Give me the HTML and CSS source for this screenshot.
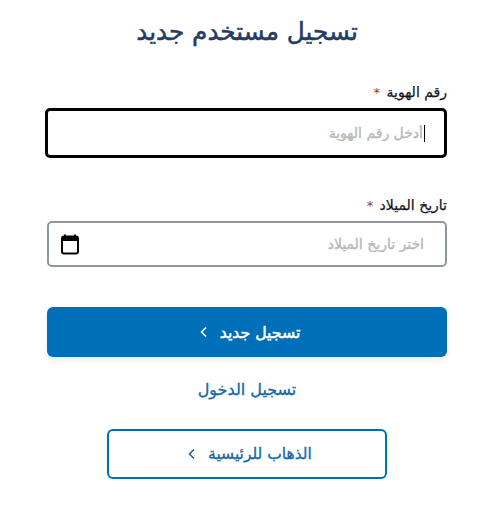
FILE: index.html
```html
<!DOCTYPE html>
<html lang="ar" dir="rtl">
<head>
    <meta charset="UTF-8">
    <meta name="viewport" content="width=device-width, initial-scale=1.0">
    <title>تسجيل مستخدم جديد</title>
    <link rel="stylesheet" href="styles.css">
</head>
<body>

    <form class="register-form">
        <h1 class="title">تسجيل مستخدم جديد</h1>

        <!-- ID number -->
        <div class="form-group group-id">
            <label class="form-label" for="idNumber">رقم الهوية <span class="required">*</span></label>
            <div class="field field-focus">
                <span class="caret"></span>
                <input class="field-input" type="text" id="idNumber" placeholder="أدخل رقم الهوية">
            </div>
        </div>

        <!-- Birth date -->
        <div class="form-group group-date">
            <label class="form-label" for="birthDate">تاريخ الميلاد <span class="required">*</span></label>
            <div class="field">
                <input class="field-input" type="text" id="birthDate" placeholder="اختر تاريخ الميلاد">
                <svg class="calendar-icon" width="24" height="24" viewBox="0 0 24 24" fill="none">
                    <path d="M7 2.5v3M17 2.5v3" stroke="#000" stroke-width="2"/>
                    <rect x="4" y="4.5" width="16" height="17" rx="2" stroke="#000" stroke-width="2"/>
                    <rect x="4" y="4.5" width="16" height="4.5" fill="#000"/>
                </svg>
            </div>
        </div>

        <button class="button button-primary" type="button">
            <span>تسجيل جديد</span>
            <svg class="chevron" width="12" height="12" viewBox="0 0 12 12" fill="none">
                <path d="M8 1.5 3.5 6 8 10.5" stroke="currentColor" stroke-width="1.6"/>
            </svg>
        </button>

        <a class="login-link" href="#">تسجيل الدخول</a>

        <button class="button button-outline" type="button">
            <span>الذهاب للرئيسية</span>
            <svg class="chevron" width="12" height="12" viewBox="0 0 12 12" fill="none">
                <path d="M8 1.5 3.5 6 8 10.5" stroke="currentColor" stroke-width="1.6"/>
            </svg>
        </button>
    </form>

</body>
</html>
```

FILE: styles.css
```css
body {
    font-family: "DejaVu Sans", "Noto Sans", sans-serif;
    background-color: #fff;
    margin: 0;
}
.register-form {
    display: flex;
    flex-direction: column;
    align-items: center;
    padding: 17px 45px 0 47px;
}
.title {
    margin: 0;
    font-size: 24.7px;
    line-height: 30px;
    font-weight: 400;
    color: #243b64;
    -webkit-text-stroke: 0.5px #243b64;
}
.form-group {
    width: 100%;
}
.group-id {
    margin-top: 36px;
}
.group-date {
    margin-top: 38px;
}
.form-label {
    display: block;
    font-size: 14px;
    line-height: 18px;
    font-weight: 400;
    color: #14141f;
    -webkit-text-stroke: 0.25px #14141f;
    margin-bottom: 6px;
}
.required {
    font-size: 13px;
    margin-right: 2px;
    color: #8a3b2a;
    -webkit-text-stroke: 0;
}
.field {
    position: relative;
    display: flex;
    align-items: center;
    height: 46px;
    box-sizing: border-box;
    padding: 0 21px;
    border: 2px solid #8e979c;
    border-radius: 5px;
    background-color: #fff;
}
.field-focus {
    height: 50px;
    margin-left: -2px;
    border: 3px solid #000;
}
.field-input {
    flex: 1;
    min-width: 0;
    border: none;
    outline: none;
    padding: 0;
    font-family: inherit;
    font-size: 14px;
    font-weight: 400;
    background: transparent;
}
.field-input::placeholder {
    color: #b9b9b9;
    opacity: 1;
    -webkit-text-stroke: 0.4px #b9b9b9;
}
.caret {
    position: absolute;
    right: 19px;
    top: 14px;
    width: 1px;
    height: 17px;
    background-color: #000;
}
.calendar-icon {
    margin-left: -12px;
}
.button {
    display: flex;
    align-items: center;
    justify-content: center;
    gap: 10px;
    height: 50px;
    box-sizing: border-box;
    padding: 0 0 0 4px;
    font-family: inherit;
    font-weight: 400;
    border-radius: 6px;
    box-shadow: 0 3px 6px rgba(0, 0, 0, 0.08);
    cursor: pointer;
}
.button-primary {
    width: 100%;
    margin-top: 40px;
    border: none;
    background-color: #006fb9;
    color: #fff;
    font-size: 15.7px;
    -webkit-text-stroke: 0.5px #fff;
}
.button-outline {
    width: 280px;
    margin-top: 28px;
    border: 2px solid #006fb9;
    background-color: #fff;
    color: #1668a8;
    font-size: 15.5px;
    -webkit-text-stroke: 0.35px #1668a8;
}
.login-link {
    margin-top: 22px;
    font-size: 16px;
    line-height: 22px;
    font-weight: 400;
    color: #1668a8;
    -webkit-text-stroke: 0.35px #1668a8;
    text-decoration: none;
}
```
